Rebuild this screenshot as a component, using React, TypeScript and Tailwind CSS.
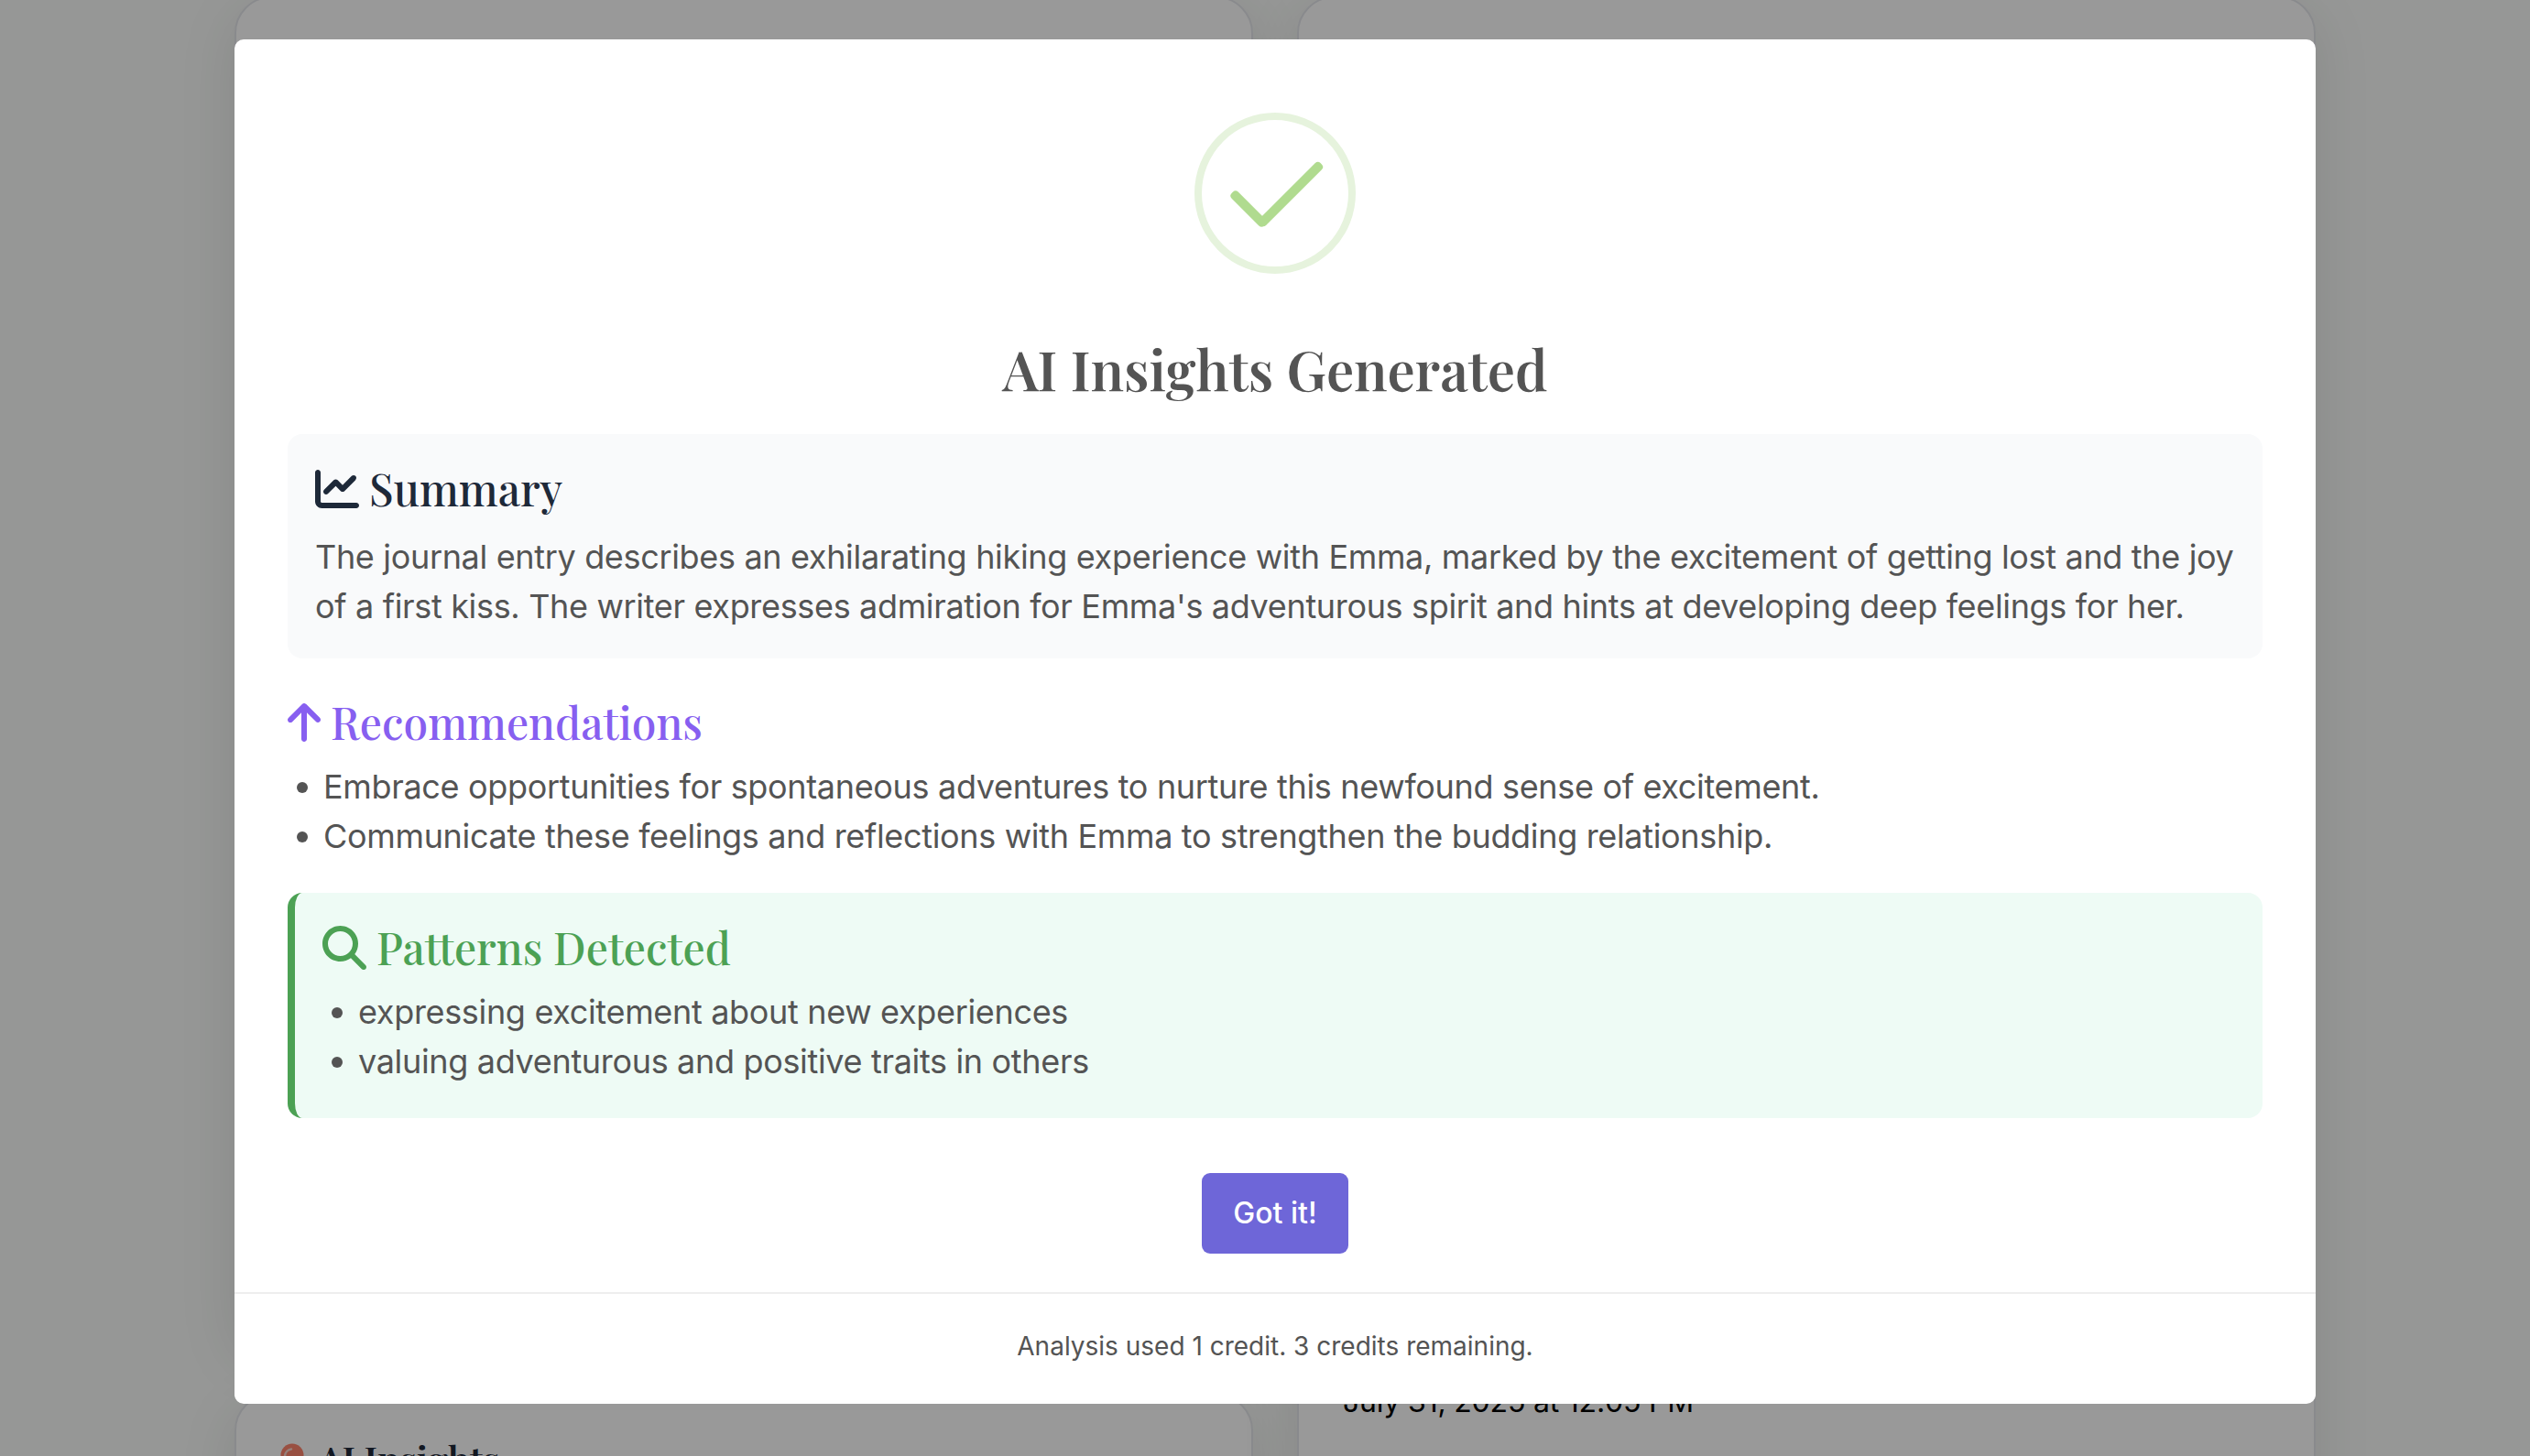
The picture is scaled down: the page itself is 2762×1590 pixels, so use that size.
import React from 'react';
import { FaArrowUp, FaChartLine, FaMagnifyingGlass } from 'react-icons/fa6';

const recommendations = [
  'Embrace opportunities for spontaneous adventures to nurture this newfound sense of excitement.',
  'Communicate these feelings and reflections with Emma to strengthen the budding relationship.'
];

const patterns = [
  'expressing excitement about new experiences',
  'valuing adventurous and positive traits in others'
];

const SuccessIcon: React.FC = () => (
  <svg width="176" height="176" viewBox="0 0 176 176" className="mx-auto shrink-0">
    <circle cx="88" cy="88" r="84" fill="none" stroke="#e6f3dd" strokeWidth="8" />
    <rect x="34" y="100" width="50" height="10" rx="4" fill="#b0db8f" transform="rotate(45 59 105)" />
    <rect x="58" y="84" width="94" height="10" rx="4" fill="#b0db8f" transform="rotate(-45 105 89)" />
  </svg>
);

interface HeadingProps {
  icon: React.ReactNode;
  title: string;
  className: string;
}

const Heading: React.FC<HeadingProps> = ({ icon, title, className }) => (
  <h3 className={`flex h-[60px] items-center font-['Playfair_Display','Liberation_Serif',serif] text-[48px] leading-[60px] font-medium ${className}`}>
    {icon}
    <span className="pb-[3px] whitespace-nowrap">{title}</span>
  </h3>
);

const BulletList: React.FC<{ items: string[] }> = ({ items }) => (
  <ul>
    {items.map((item) => (
      <li key={item} className="flex items-center whitespace-nowrap pl-[10px]">
        <span className="mt-[2px] mr-[17px] size-[12px] rounded-full bg-[#545454]" />
        {item}
      </li>
    ))}
  </ul>
);

// Journal page that sits behind the dialog
const JournalPage: React.FC = () => (
  <div className="grid h-[1590px] grid-cols-2 gap-12 overflow-hidden bg-[#fafcfa] pr-[234px] pl-[256px]">
    <div className="-mt-1 flex flex-col gap-12">
      <div className="h-[1478px] shrink-0 rounded-[40px] border-2 border-gray-200 bg-white shadow-[0_16px_64px_rgba(0,0,0,0.1)]" />
      <div className="h-[400px] shrink-0 rounded-[40px] border-2 border-gray-200 bg-white px-[46px] pt-[41px] shadow-[0_16px_64px_rgba(0,0,0,0.1)]">
        <div className="flex items-start">
          <svg width="32" height="44" viewBox="0 0 32 44" className="mt-[11px] mr-[12px]">
            <path d="M14 22h3v20l-1.500 2-1.500-2z" fill="#9ca3af" />
            <circle cx="15" cy="13" r="12.500" fill="#ff856e" />
            <path d="M7 14a8 8 0 0 1 7-7.500" fill="none" stroke="#fbd5cc" strokeWidth="2.500" strokeLinecap="round" />
          </svg>
          <h2 className="whitespace-nowrap font-['Playfair_Display','Liberation_Serif',serif] text-[40px] leading-[56px] font-semibold text-gray-800">
            AI Insights
          </h2>
        </div>
      </div>
    </div>
    <div className="-mt-1 h-[1800px] rounded-[40px] border-2 border-gray-200 bg-white px-[48px] pt-[1505px] shadow-[0_16px_64px_rgba(0,0,0,0.1)]">
      <p className="whitespace-nowrap text-[32px] leading-[56px] tracking-[-0.2px] text-black">July 31, 2025 at 12:05 PM</p>
    </div>
  </div>
);

const InsightsDialog: React.FC = () => (
  <div className="flex h-[1490px] w-[2272px] flex-col rounded-[10px] bg-white pt-[80px] text-[#545454]">
    <SuccessIcon />
    <h2 className="mt-[63px] h-[80px] text-center font-['Playfair_Display','Liberation_Serif',serif] text-[60px] leading-[80px] font-semibold whitespace-nowrap">
      AI Insights Generated
    </h2>

    <div className="mx-[58px] mt-[32px] text-[36px] leading-[54px] tracking-[-0.33px]">
      {/* Summary */}
      <section className="h-[245px] rounded-[16px] bg-gray-50 px-[30px] pt-[30px]">
        <Heading
          icon={<FaChartLine size={48} className="mr-[11px]" />}
          title="Summary"
          className="tracking-normal text-gray-800"
        />
        <p className="mt-[17px] tracking-[-0.335px]">
          The journal entry describes an exhilarating hiking experience with Emma, marked by the excitement of getting lost and the joy of a first kiss. The writer expresses admiration for Emma's adventurous spirit and hints at developing deep feelings for her.
        </p>
      </section>

      {/* Recommendations */}
      <section className="mt-[40px] h-[216px]">
        <Heading
          icon={<FaArrowUp size={48} className="mr-[11px] w-[36px]" />}
          title="Recommendations"
          className="tracking-normal text-[#875ff0]"
        />
        <div className="mt-[13px]">
          <BulletList items={recommendations} />
        </div>
      </section>

      {/* Patterns */}
      <section className="h-[246px] rounded-[16px] border-l-8 border-[#4ca154] bg-[#eefbf5] px-[30px] pt-[30px]">
        <Heading
          icon={<FaMagnifyingGlass size={48} className="mr-[11px]" />}
          title="Patterns Detected"
          className="tracking-normal text-[#4ca154]"
        />
        <div className="mt-[13px]">
          <BulletList items={patterns} />
        </div>
      </section>
    </div>

    <button className="mx-auto mt-[60px] h-[88px] w-[160px] rounded-[9px] bg-[#6e66d8] text-[32px] font-medium text-white">
      Got it!
    </button>

    <footer className="mt-[42px] flex h-[122px] items-center justify-center border-t-2 border-[#eeeeee] pb-[6px] text-[28px] whitespace-nowrap">
      Analysis used 1 credit. 3 credits remaining.
    </footer>
  </div>
);

const App: React.FC = () => (
  <div className="relative h-[1590px] w-[2762px] overflow-hidden font-['Inter',sans-serif]">
    <JournalPage />
    <div className="absolute inset-0 flex bg-black/40 pt-[43px] pl-[256px]">
      <InsightsDialog />
    </div>
  </div>
);

export default App;
